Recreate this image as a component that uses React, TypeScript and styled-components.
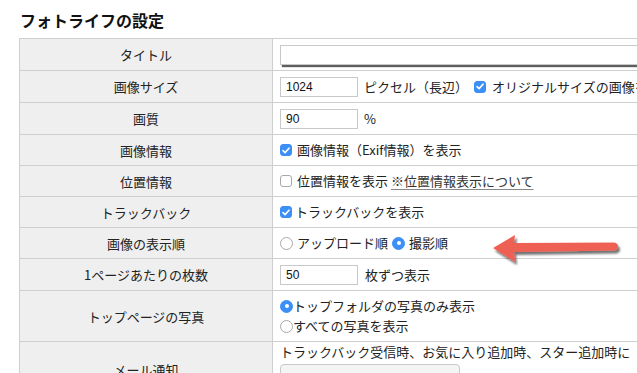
import { createGlobalStyle, styled } from 'styled-components';

const GlobalStyle = createGlobalStyle`
  html, body {
    margin: 0;
    padding: 0;
    background: #fff;
    overflow: hidden;
  }
  body {
    font-family: 'Noto Sans CJK JP', 'Liberation Sans', sans-serif;
    color: #222;
  }
`;

const Page = styled.div`
  position: relative;
  padding: 10px 0 0 19px;
  width: 900px;
`;

const Title = styled.h2`
  margin: 0 0 8px 1px;
  font-size: 16px;
  line-height: 20px;
  font-weight: bold;
  color: #111;
`;

const Table = styled.table`
  border-collapse: collapse;
  width: 780px;
  font-size: 13px;
`;

const Row = styled.tr<{ $h: number }>`
  height: ${(p) => p.$h}px;
`;

const Label = styled.th`
  width: 236px;
  padding: 0 8px;
  background: #efefef;
  border: 1px solid #cfcfcf;
  font-weight: normal;
  text-align: center;
  vertical-align: middle;
  color: #222;
`;

const Value = styled.td<{ $top?: boolean }>`
  padding: 0 7px;
  border: 1px solid #cfcfcf;
  vertical-align: ${(p) => (p.$top ? 'top' : 'middle')};
  white-space: nowrap;
`;

const Line = styled.div<{ $gap?: number }>`
  display: flex;
  align-items: center;
  gap: ${(p) => p.$gap ?? 6}px;
  line-height: 20px;
`;

const TextBox = styled.div<{ $w?: number; $shadow?: boolean }>`
  box-sizing: border-box;
  width: ${(p) => (p.$w ? `${p.$w}px` : '100%')};
  height: 20px;
  border: 1px solid #c9c9c9;
  background: #fff;
  padding: 0 5px;
  font-family: 'Liberation Sans', Arial, sans-serif;
  font-size: 12px;
  line-height: 19px;
  color: #111;
  box-shadow: ${(p) => (p.$shadow ? '2px 2px 1px rgba(40,40,40,0.75)' : 'none')};
`;

const Check = styled.span<{ $on?: boolean }>`
  display: inline-flex;
  align-items: center;
  justify-content: center;
  box-sizing: border-box;
  width: 12px;
  height: 12px;
  border-radius: 3px;
  background: ${(p) => (p.$on ? '#3b8ff6' : '#fff')};
  border: 1px solid ${(p) => (p.$on ? '#3b8ff6' : '#a9a9a9')};
  flex-shrink: 0;
`;

const Radio = styled.span<{ $on?: boolean }>`
  display: inline-flex;
  align-items: center;
  justify-content: center;
  box-sizing: border-box;
  width: 13px;
  height: 13px;
  border-radius: 50%;
  background: ${(p) => (p.$on ? '#3b8ff6' : '#fff')};
  border: 1px solid ${(p) => (p.$on ? '#3b8ff6' : '#a9a9a9')};
  flex-shrink: 0;

  &::after {
    content: '';
    display: ${(p) => (p.$on ? 'block' : 'none')};
    width: 4px;
    height: 4px;
    border-radius: 50%;
    background: #fff;
  }
`;

const Link = styled.span`
  text-decoration: underline;
  text-decoration-color: #888;
  text-underline-offset: 3px;
  color: #333;
`;

const SelectBox = styled.div`
  box-sizing: border-box;
  width: 180px;
  height: 20px;
  margin-top: 2px;
  border: 1px solid #c9c9c9;
  border-radius: 4px;
  background: #f4f4f4;
`;

const ArrowWrap = styled.svg`
  position: absolute;
  left: 490px;
  top: 232px;
`;

const Tick = () => (
  <svg width="8" height="7" viewBox="0 0 8 7">
    <path d="M1 3.6 L3.1 5.6 L7 1.2" fill="none" stroke="#fff" strokeWidth="1.6" strokeLinecap="round" strokeLinejoin="round" />
  </svg>
);

const Arrow = () => (
  <ArrowWrap width="140" height="36" viewBox="0 0 140 36">
    <defs>
      <filter id="sh" x="-10%" y="-30%" width="130%" height="180%">
        <feDropShadow dx="2" dy="3" stdDeviation="1.2" floodColor="#000" floodOpacity="0.55" />
      </filter>
    </defs>
    <path
      d="M3 16 L25 3 L24 11 L124 10.5 Q128 11 128 14.5 Q128 18 124 18.5 L24 20 L25 30 Z"
      fill="#ee6152"
      filter="url(#sh)"
    />
  </ArrowWrap>
);

export default function App() {
  return (
    <Page>
      <GlobalStyle />
      <Title>フォトライフの設定</Title>
      <Table>
        <tbody>
          <Row $h={32}>
            <Label>タイトル</Label>
            <Value>
              <TextBox $shadow />
            </Value>
          </Row>
          <Row $h={32}>
            <Label>画像サイズ</Label>
            <Value>
              <Line>
                <TextBox $w={78}>1024</TextBox>
                <span>ピクセル（長辺）</span>
                <Check $on>
                  <Tick />
                </Check>
                <span>オリジナルサイズの画像を保存</span>
              </Line>
            </Value>
          </Row>
          <Row $h={32}>
            <Label>画質</Label>
            <Value>
              <Line>
                <TextBox $w={78}>90</TextBox>
                <span>%</span>
              </Line>
            </Value>
          </Row>
          <Row $h={31}>
            <Label>画像情報</Label>
            <Value>
              <Line $gap={5}>
                <Check $on>
                  <Tick />
                </Check>
                <span>画像情報（Exif情報）を表示</span>
              </Line>
            </Value>
          </Row>
          <Row $h={31}>
            <Label>位置情報</Label>
            <Value>
              <Line $gap={5}>
                <Check />
                <span>
                  位置情報を表示 <Link>※位置情報表示について</Link>
                </span>
              </Line>
            </Value>
          </Row>
          <Row $h={31}>
            <Label>トラックバック</Label>
            <Value>
              <Line $gap={3}>
                <Check $on>
                  <Tick />
                </Check>
                <span>トラックバックを表示</span>
              </Line>
            </Value>
          </Row>
          <Row $h={31}>
            <Label>画像の表示順</Label>
            <Value>
              <Line $gap={4}>
                <Radio />
                <span>アップロード順</span>
                <Radio $on />
                <span>撮影順</span>
              </Line>
            </Value>
          </Row>
          <Row $h={32}>
            <Label>1ページあたりの枚数</Label>
            <Value>
              <Line $gap={7}>
                <TextBox $w={78}>50</TextBox>
                <span>枚ずつ表示</span>
              </Line>
            </Value>
          </Row>
          <Row $h={51}>
            <Label>トップページの写真</Label>
            <Value>
              <Line $gap={0}>
                <Radio $on />
                <span>トップフォルダの写真のみ表示</span>
              </Line>
              <Line $gap={0}>
                <Radio />
                <span>すべての写真を表示</span>
              </Line>
            </Value>
          </Row>
          <Row $h={56}>
            <Label>メール通知</Label>
            <Value $top>
              <Line>
                <span>トラックバック受信時、お気に入り追加時、スター追加時に</span>
              </Line>
              <SelectBox />
            </Value>
          </Row>
        </tbody>
      </Table>
      <Arrow />
    </Page>
  );
}
